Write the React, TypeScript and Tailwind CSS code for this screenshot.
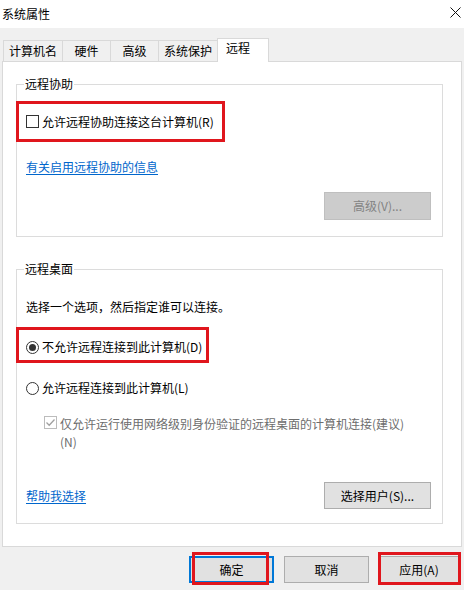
import React from "react";

const RED = "border-[#e0161d]";

function Checkbox({ disabled }: { disabled?: boolean }) {
  if (disabled) {
    return (
      <span className="w-[13px] h-[13px] border border-[#bcbcbc] bg-white flex items-center justify-center shrink-0">
        <svg width="11" height="11" viewBox="0 0 11 11">
          <path d="M1.5 5.5 L4.2 8.2 L9.5 2.5" fill="none" stroke="#a0a0a0" strokeWidth="1.3" />
        </svg>
      </span>
    );
  }
  return <span className="w-[13px] h-[13px] border border-[#333333] bg-white shrink-0" />;
}

function Radio({ checked }: { checked?: boolean }) {
  return (
    <span className="w-[13px] h-[13px] rounded-full border border-[#333333] bg-white flex items-center justify-center shrink-0">
      {checked && <span className="w-[7px] h-[7px] rounded-full bg-[#333333]" />}
    </span>
  );
}

function Group({ label, h, children }: { label: string; h: string; children: React.ReactNode }) {
  return (
    <div className={`relative w-[427px] border border-[#dcdcdc] flex flex-col ${h}`}>
      <span className="absolute -top-[9px] left-[7px] px-[1px] bg-white leading-[16px] text-black">{label}</span>
      {children}
    </div>
  );
}

export default function App() {
  const tabs = [
    { t: "计算机名", w: "w-[60px]" },
    { t: "硬件", w: "w-[49px]" },
    { t: "高级", w: "w-[49px]" },
    { t: "系统保护", w: "w-[60px]" },
  ];
  return (
    <div
      className="w-[464px] h-[590px] bg-[#f0f0f0] text-[12px] text-black overflow-hidden"
      style={{ fontFamily: '"Noto Sans CJK SC", "Noto Sans", sans-serif' }}
    >
      {/* Title bar */}
      <div className="h-[28px] bg-white flex items-center justify-between pl-[2px] pr-[3px]">
        <span className="leading-[16px]">系统属性</span>
        <svg width="11" height="11" viewBox="0 0 11 11" className="mb-[4px]">
          <path d="M0.5 0.5 L10.5 10.5 M10.5 0.5 L0.5 10.5" stroke="#111" strokeWidth="1" />
        </svg>
      </div>

      {/* Tabs */}
      <div className="flex items-end pt-[10px] pl-[3px]">
        {tabs.map((tab, i) => (
          <div
            key={tab.t}
            className={`${tab.w} h-[21px] border border-b-0 border-[#d9d9d9] bg-[#f0f0f0] flex items-center justify-center leading-[16px] ${i > 0 ? "-ml-px" : ""}`}
          >
            {tab.t}
          </div>
        ))}
        <div className="relative z-10 w-[52px] h-[24px] -mb-px -ml-px border border-b-0 border-[#d9d9d9] bg-white flex items-center pl-[8px] pb-[5px] leading-[16px]">
          远程
        </div>
      </div>

      {/* Panel */}
      <div className="ml-[2px] w-[460px] h-[486px] border border-[#d9d9d9] bg-white pt-[22px] pl-[13px]">
        <Group label="远程协助" h="h-[153px]">
          <div className={`mt-[16px] -ml-px w-[209px] h-[41px] border-[3px] ${RED} flex items-center pl-[7px] gap-[3px]`}>
            <Checkbox />
            <span className="leading-[16px]">允许远程协助连接这台计算机(R)</span>
          </div>
          <span className="mt-[17px] ml-[9px] leading-[16px] text-[#0066cc] underline underline-offset-2 self-start">
            有关启用远程协助的信息
          </span>
          <div className="mt-[17px] self-end mr-[11px] w-[107px] h-[28px] bg-[#cccccc] border border-[#bfbfbf] text-[#838383] flex items-center justify-center">
            高级(V)...
          </div>
        </Group>

        <div className="h-[32px]" />

        <Group label="远程桌面" h="h-[255px]">
          <span className="mt-[29px] ml-[9px] leading-[16px]">选择一个选项，然后指定谁可以连接。</span>
          <div className={`mt-[12px] -ml-px w-[193px] h-[36px] border-[3px] ${RED} flex items-center pl-[7px] pt-[4px] gap-[3px]`}>
            <Radio checked />
            <span className="leading-[16px]">不允许远程连接到此计算机(D)</span>
          </div>
          <div className="mt-[17px] ml-[9px] flex items-center gap-[3px] h-[16px]">
            <Radio />
            <span className="leading-[16px]">允许远程连接到此计算机(L)</span>
          </div>
          <div className="mt-[19px] ml-[27px] flex items-start gap-[3px]">
            <span className="mt-[1px]">
              <Checkbox disabled />
            </span>
            <span className="leading-[18px] text-[#6d6d6d]">
              仅允许运行使用网络级别身份验证的远程桌面的计算机连接(建议)
              <br />
              (N)
            </span>
          </div>
          <div className="mt-[31px] ml-[9px] mr-[11px] flex items-center justify-between">
            <span className="leading-[16px] text-[#0066cc] underline underline-offset-2">帮助我选择</span>
            <div className="w-[107px] h-[27px] bg-[#e1e1e1] border border-[#adadad] flex items-center justify-center">
              选择用户(S)...
            </div>
          </div>
        </Group>
      </div>

      {/* Bottom buttons */}
      <div className="mt-[9px] flex pl-[189px]">
        <div className="relative w-[85px] h-[27px]">
          <div className="w-full h-full bg-[#e1e1e1] border-2 border-[#0078d7] flex items-center justify-center">确定</div>
          <div className={`absolute left-[3px] -top-[4px] w-[77px] h-[33px] border-[3px] ${RED}`} />
        </div>
        <div className="ml-[10px] w-[85px] h-[27px] bg-[#e1e1e1] border border-[#adadad] flex items-center justify-center">
          取消
        </div>
        <div className="relative ml-[9px] w-[82px] h-[27px]">
          <div className="w-full h-full bg-[#e1e1e1] border border-[#adadad] flex items-center justify-center">应用(A)</div>
          <div className={`absolute left-0 -top-[4px] w-[83px] h-[33px] border-[3px] ${RED}`} />
        </div>
      </div>
    </div>
  );
}
